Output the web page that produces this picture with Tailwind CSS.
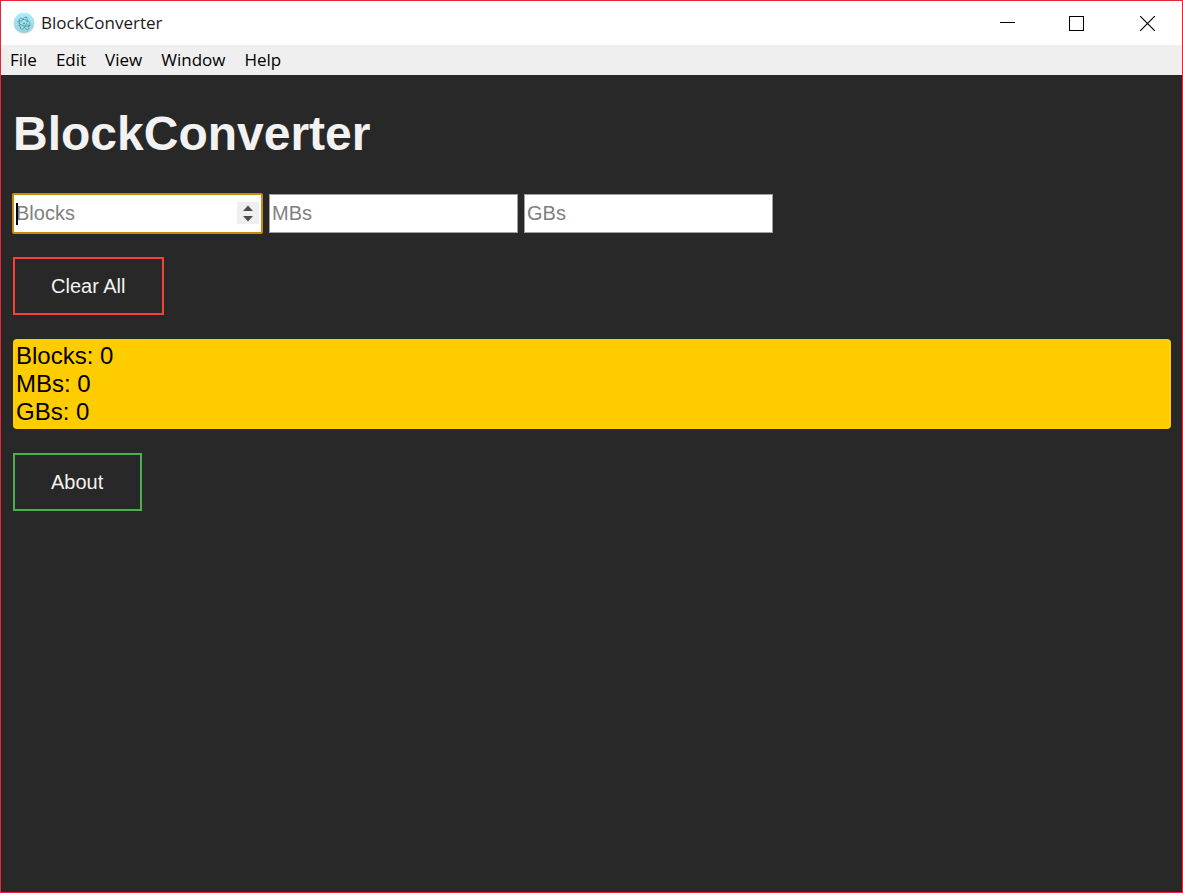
<!DOCTYPE html>
<html lang="en">
<head>
<meta charset="utf-8">
<meta name="viewport" content="width=device-width, initial-scale=1">
<title>BlockConverter</title>
<script src="https://cdn.jsdelivr.net/npm/@tailwindcss/browser@4"></script>
</head>
<body class="flex min-h-screen flex-col border border-[#e92434] bg-[#282828] font-['Liberation_Sans',Arial,sans-serif]">
  <header class="font-['Open_Sans','Noto_Sans',sans-serif] text-black">
    <div class="flex h-11 items-center bg-white pl-3">
      <svg class="size-[22px]" viewBox="0 0 22 22" fill="none" aria-hidden="true">
        <defs><linearGradient id="disc" x2="0" y2="1"><stop stop-color="#aeeef8"/><stop offset="1" stop-color="#93d3df"/></linearGradient></defs>
        <circle cx="11" cy="11.4" r="10.5" fill="#d2d8d9"/>
        <circle cx="11" cy="10.7" r="10.1" fill="url(#disc)"/>
        <g stroke="#4f8f9d" stroke-width="0.8" stroke-linecap="round">
          <path d="M7.300 8.500C5.500 8.700 4.600 9.400 5 10.400c.7 1.500 4 3.200 7.300 3.700 1.800.3 3.300.2 4.200-.3M16.300 12c1-1 .7-2-1-3-1.500-.9-3.500-1.400-5.400-1.500"/>
          <path d="M7.400 14.700c-.2 1.700.2 2.700 1.100 2.700 1.500 0 3.700-2.700 5-5.700.8-1.900 1.100-3.600.9-4.800M12.700 5.200c-1.300-.4-3.200 1.500-4.600 4.300"/>
          <path d="M7 12.800c-1-2.900-1-5.600 0-6.400.7-.5 1.900 0 3.200 1.200M15 12.700c1 2.500.9 4.200 0 4.700-.9.500-2.400-.5-3.900-2.300"/>
        </g>
        <g fill="#4f8f9d"><circle cx="11" cy="11.400" r="0.8"/><circle cx="6.400" cy="13.700" r="0.8"/><circle cx="16.800" cy="13.200" r="0.8"/><circle cx="13.500" cy="5.600" r="0.8"/></g>
      </svg>
      <span class="ml-1.5 text-[17px] leading-6 text-[#1a1a1a]">BlockConverter</span>
      <div class="ml-auto flex h-full">
        <button type="button" aria-label="Minimize" class="flex w-[65px] items-center justify-center">
          <svg class="size-[15px]" viewBox="0 0 15 15" shape-rendering="crispEdges"><path d="M0 6.500h15" stroke="#000"/></svg>
        </button>
        <button type="button" aria-label="Maximize" class="flex w-[73px] items-center justify-center">
          <svg class="size-[15px]" viewBox="0 0 15 15" fill="none" shape-rendering="crispEdges"><path d="M.5.5h14v14H.5z" stroke="#000"/></svg>
        </button>
        <button type="button" aria-label="Close" class="flex w-[69px] items-center justify-center">
          <svg class="size-[15px]" viewBox="0 0 15 15"><path d="M0 0l15 15M15 0L0 15" stroke="#000" stroke-width="1.200"/></svg>
        </button>
      </div>
    </div>
    <nav class="flex h-[30px] items-center gap-[19px] bg-[#efefef] pl-[9px] text-[17px] leading-6">
      <button type="button">File</button>
      <button type="button">Edit</button>
      <button type="button">View</button>
      <button type="button">Window</button>
      <button type="button">Help</button>
    </nav>
  </header>

  <main class="flex flex-1 flex-col items-start pt-[35px] pr-[11px] pl-3 text-[#f2f2f2]">
    <h1 class="text-5xl leading-none font-bold">BlockConverter</h1>

    <form class="mt-[35px] -ml-px flex items-center gap-1.5 text-xl text-black">
      <div class="relative">
        <input type="number" aria-label="Blocks" placeholder="Blocks" class="block h-[41px] w-[251px] appearance-none rounded-[2px] border-2 border-[#c98a12] bg-white px-0.5 outline-none placeholder:text-[#808080] [&::-webkit-inner-spin-button]:appearance-none">
        <span class="absolute top-2.5 left-1 h-[22px] w-0.5 bg-black"></span>
        <svg class="absolute top-[9px] right-1 h-[22px] w-[22px] bg-[#efefef]" viewBox="0 0 22 22" fill="#4d4d4d" aria-hidden="true"><path d="M6 9l5-5.500L16 9zM6 14h10l-5 5.500z"/></svg>
      </div>
      <input type="number" aria-label="MBs" placeholder="MBs" class="h-[39px] w-[249px] appearance-none border border-[#a0a0a0] bg-white px-0.5 outline-none placeholder:text-[#808080] [&::-webkit-inner-spin-button]:appearance-none">
      <input type="number" aria-label="GBs" placeholder="GBs" class="h-[39px] w-[249px] appearance-none border border-[#a0a0a0] bg-white px-0.5 outline-none placeholder:text-[#808080] [&::-webkit-inner-spin-button]:appearance-none">
    </form>

    <button type="button" class="mt-[23px] h-[58px] border-2 border-[#f44336] pr-[37px] pl-9 text-xl">Clear All</button>

    <div class="mt-6 w-full rounded bg-[#ffcc00] p-[3px] text-2xl leading-7 text-black">
      <p>Blocks: 0</p>
      <p>MBs: 0</p>
      <p>GBs: 0</p>
    </div>

    <button type="button" class="mt-6 h-[58px] border-2 border-[#4caf50] pr-[37px] pl-9 text-xl">About</button>
  </main>
</body>
</html>
